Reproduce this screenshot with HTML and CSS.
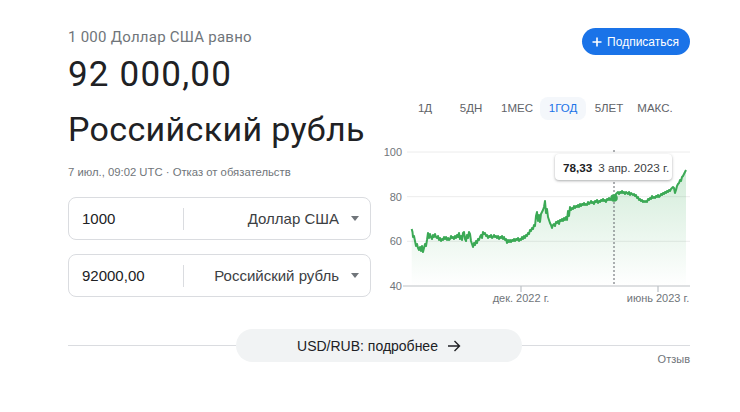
FILE: index.html
```html
<!DOCTYPE html>
<html lang="ru">
<head>
<meta charset="utf-8">
<link rel="stylesheet" href="styles.css">
</head>
<body>
<div class="page">
  <div class="columns">
    <div class="left">
      <div class="equal">1 000 Доллар США равно</div>
      <div class="amount">92 000,00</div>
      <div class="currency">Российский рубль</div>
      <div class="date">7 июл., 09:02 UTC · Отказ от обязательств</div>
      <div class="field">
        <div class="value">1000</div>
        <div class="sep"></div>
        <div class="select"><span>Доллар США</span><span class="caret"></span></div>
      </div>
      <div class="field field-2">
        <div class="value">92000,00</div>
        <div class="sep"></div>
        <div class="select"><span>Российский рубль</span><span class="caret"></span></div>
      </div>
    </div>
    <div class="right">
      <button class="subscribe"><svg class="plus" width="10" height="10" viewBox="0 0 10 10"><path d="M5 0.5V9.5M0.5 5H9.5" stroke="#fff" stroke-width="1.6"/></svg>Подписаться</button>
      <div class="tabs">
        <span class="tab">1Д</span>
        <span class="tab">5ДН</span>
        <span class="tab">1МЕС</span>
        <span class="tab active">1ГОД</span>
        <span class="tab">5ЛЕТ</span>
        <span class="tab">МАКС.</span>
      </div>
      <div class="chart">
        <svg width="310" height="170" viewBox="0 0 310 170">
          <defs>
            <linearGradient id="fill" x1="0" y1="0" x2="0" y2="1">
              <stop offset="0" stop-color="#34a853" stop-opacity="0.22"/>
              <stop offset="1" stop-color="#34a853" stop-opacity="0"/>
            </linearGradient>
          </defs>
          <g stroke="#ececec" stroke-width="1">
            <line x1="27" y1="12" x2="310" y2="12"/>
            <line x1="27" y1="56.7" x2="310" y2="56.7"/>
            <line x1="27" y1="101.3" x2="310" y2="101.3"/>
          </g>
          <g class="ylab" text-anchor="end">
            <text x="22" y="16">100</text>
            <text x="22" y="61">80</text>
            <text x="22" y="105">60</text>
            <text x="22" y="150">40</text>
          </g>
          <path fill="url(#fill)" d="M31.7,89 L32.5,92 33,97 34,96 35,101 36,106 37,104 38,108 39,110 40,107 41,111 42,106 43,112 44,108 45,104 46,106 47,100 48,93 49,98 50,94 51,97 52,99 53,95 54,97 55,94 56,97 57,98 58,96 59,100 60,98 61,101 62,99 63,100 64,97 65,99 66,97 67,100 68,98 69,100 70,99 71,96 72,98 73,97 74,99 75,96 76,98 77,95 78,97 79,93 80,99 81,96 82,100 83,93 84,92 85,99 86,101 87,95 88,98 89,92 90,94 91,101 92,104 93,107 94,103 95,105 96,101 97,103 98,99 99,100 100,97 101,95 102,98 103,92 104,94 105,93 106,96 107,95 108,98 109,96 110,97 111,95 112,98 113,97 114,95 115,97 116,96 117,98 118,96 119,99 120,97 121,98 122,96 123,99 124,97 125,100 126,99 127,103 128,100 129,102 130,100 131,102 132,100 133,101 134,99 135,101 136,99 137,100 138,98 139,101 140,99 141,100 142,97 143,99 144,96 145,98 146,95 147,96 148,93 149,94 150,90 151,91 152,88 153,89 154,85 155,86 156,76 157,72 158,81 159,75 160,82 161,74 162,72 163,70 164,67 165,61 166,73 167,69 168,77 169,80 170,83 171,85 172,88 173,85 174,84 175,86 176,82 177,83 178,81 179,84 180,80 181,81 182,79 183,81 184,78 185,80 186,77 187,80 188,71 189,76 190,67 191,70 192,68 193,69 194,66 195,68 196,66 197,67 198,65 199,67 200,64 201,66 202,64 203,65 204,63 205,65 206,64 207,65 208,62 209,64 210,63 211,61 212,63 213,62 214,64 215,61 216,62 217,60 218,63 219,61 220,62 221,60 222,61 223,59 224,61 225,60 226,62 227,59 228,60 229,58 230,60 231,59 232,58 233,59 234,58 235,56 236,54 237,53 238,52 239,54 240,52 241,53 242,51 243,53 244,52 245,54 246,52 247,53 248,54 249,52 250,55 251,53 252,54 253,55 254,54 255,56 256,55 257,58 258,57 259,60 260,59 261,61 262,60 263,62 264,61 265,62 266,61 267,62 268,59 269,60 270,58 271,59 272,56 273,58 274,57 275,58 276,56 277,57 278,55 279,57 280,56 281,54 282,55 283,53 284,54 285,52 286,53 287,51 288,52 289,50 290,51 291,49 292,48 293,47 294,48 295,53 296,50 297,46 298,44 299,43 300,40 301,41 302,37 303,36 304,34 305,32 306,30 L306,146 L31.7,146 Z"/>
          <line x1="234" y1="10" x2="234" y2="146" stroke="#5f6368" stroke-width="1" stroke-dasharray="2,2"/>
          <path fill="none" stroke="#3ba955" stroke-width="2" stroke-linejoin="round" d="M31.7,89 L32.5,92 33,97 34,96 35,101 36,106 37,104 38,108 39,110 40,107 41,111 42,106 43,112 44,108 45,104 46,106 47,100 48,93 49,98 50,94 51,97 52,99 53,95 54,97 55,94 56,97 57,98 58,96 59,100 60,98 61,101 62,99 63,100 64,97 65,99 66,97 67,100 68,98 69,100 70,99 71,96 72,98 73,97 74,99 75,96 76,98 77,95 78,97 79,93 80,99 81,96 82,100 83,93 84,92 85,99 86,101 87,95 88,98 89,92 90,94 91,101 92,104 93,107 94,103 95,105 96,101 97,103 98,99 99,100 100,97 101,95 102,98 103,92 104,94 105,93 106,96 107,95 108,98 109,96 110,97 111,95 112,98 113,97 114,95 115,97 116,96 117,98 118,96 119,99 120,97 121,98 122,96 123,99 124,97 125,100 126,99 127,103 128,100 129,102 130,100 131,102 132,100 133,101 134,99 135,101 136,99 137,100 138,98 139,101 140,99 141,100 142,97 143,99 144,96 145,98 146,95 147,96 148,93 149,94 150,90 151,91 152,88 153,89 154,85 155,86 156,76 157,72 158,81 159,75 160,82 161,74 162,72 163,70 164,67 165,61 166,73 167,69 168,77 169,80 170,83 171,85 172,88 173,85 174,84 175,86 176,82 177,83 178,81 179,84 180,80 181,81 182,79 183,81 184,78 185,80 186,77 187,80 188,71 189,76 190,67 191,70 192,68 193,69 194,66 195,68 196,66 197,67 198,65 199,67 200,64 201,66 202,64 203,65 204,63 205,65 206,64 207,65 208,62 209,64 210,63 211,61 212,63 213,62 214,64 215,61 216,62 217,60 218,63 219,61 220,62 221,60 222,61 223,59 224,61 225,60 226,62 227,59 228,60 229,58 230,60 231,59 232,58 233,59 234,58 235,56 236,54 237,53 238,52 239,54 240,52 241,53 242,51 243,53 244,52 245,54 246,52 247,53 248,54 249,52 250,55 251,53 252,54 253,55 254,54 255,56 256,55 257,58 258,57 259,60 260,59 261,61 262,60 263,62 264,61 265,62 266,61 267,62 268,59 269,60 270,58 271,59 272,56 273,58 274,57 275,58 276,56 277,57 278,55 279,57 280,56 281,54 282,55 283,53 284,54 285,52 286,53 287,51 288,52 289,50 290,51 291,49 292,48 293,47 294,48 295,53 296,50 297,46 298,44 299,43 300,40 301,41 302,37 303,36 304,34 305,32 306,30"/>
          <circle cx="234" cy="58" r="3.8" fill="#3ba955"/>
          <line x1="23" y1="146" x2="310" y2="146" stroke="#bdc1c6" stroke-width="1.2"/>
          <g stroke="#bdc1c6" stroke-width="1.2">
            <line x1="141" y1="146" x2="141" y2="152"/>
            <line x1="278" y1="146" x2="278" y2="152"/>
          </g>
          <g class="xlab" text-anchor="middle">
            <text x="141" y="162">дек. 2022 г.</text>
            <text x="278" y="162">июнь 2023 г.</text>
          </g>
        </svg>
        <div class="tooltip"><b>78,33</b><span>3 апр. 2023 г.</span></div>
      </div>
    </div>
  </div>
  <div class="footer">
    <div class="footer-row">
      <div class="rule"></div>
      <button class="more">USD/RUB: подробнее<svg class="arrow" width="14" height="12" viewBox="0 0 14 12"><path d="M1 6H12.5M7.5 1L12.5 6L7.5 11" fill="none" stroke="#202124" stroke-width="1.4"/></svg></button>
      <div class="rule"></div>
    </div>
    <div class="feedback">Отзыв</div>
  </div>
</div>
</body>
</html>
```

FILE: styles.css
```css
* { box-sizing: border-box; }
body {
  margin: 0;
  background: #fff;
  font-family: "Liberation Sans", Arial, sans-serif;
  color: #202124;
}
.page {
  width: 740px;
  padding: 27px 50px 0 68px;
}
.columns {
  display: flex;
  justify-content: space-between;
  align-items: flex-start;
}
.left {
  width: 303px;
  display: flex;
  flex-direction: column;
}
.equal {
  font-family: Roboto, "Liberation Sans", sans-serif;
  font-size: 15px;
  line-height: 20px;
  letter-spacing: 0.25px;
  color: #70757a;
}
.amount, .currency {
  font-family: Roboto, "Liberation Sans", sans-serif;
  font-size: 34px;
  line-height: 55px;
  color: #202124;
  white-space: nowrap;
}
.amount {
  font-size: 35px;
  letter-spacing: 1.2px;
}
.currency {
  letter-spacing: 0.35px;
}
.date {
  margin-top: 7px;
  font-size: 11.3px;
  line-height: 16px;
  color: #70757a;
}
.field {
  margin-top: 17px;
  height: 43px;
  border: 1px solid #dadce0;
  border-radius: 8px;
  display: flex;
  align-items: center;
  font-size: 15px;
  color: #202124;
}
.field-2 { margin-top: 14px; }
.value {
  width: 114px;
  padding-left: 13px;
}
.sep {
  width: 1px;
  height: 22px;
  background: #dadce0;
}
.select {
  flex: 1;
  display: flex;
  justify-content: flex-end;
  align-items: center;
  padding-right: 11px;
  color: #3c4043;
}
.caret {
  margin-left: 12px;
  width: 0;
  height: 0;
  border-left: 4.5px solid transparent;
  border-right: 4.5px solid transparent;
  border-top: 5px solid #70757a;
}
.right {
  width: 310px;
  display: flex;
  flex-direction: column;
}
.subscribe {
  align-self: flex-end;
  margin-top: 1px;
  height: 27px;
  padding: 0 11px 0 10px;
  border: none;
  border-radius: 14px;
  background: #1a73e8;
  color: #fff;
  font-family: "Liberation Sans", Arial, sans-serif;
  font-size: 12px;
  display: flex;
  align-items: center;
  gap: 5px;
}
.tabs {
  margin-top: 42px;
  padding-left: 22px;
  display: flex;
  height: 23px;
  align-items: center;
}
.tab {
  width: 46px;
  height: 23px;
  line-height: 23px;
  text-align: center;
  font-size: 11.5px;
  color: #5f6368;
  border-radius: 8px;
}
.tab.active {
  color: #1a73e8;
  background: #f4f7fb;
}
.chart {
  margin-top: 20px;
  position: relative;
  width: 310px;
  height: 170px;
}
.chart svg { display: block; }
.ylab text, .xlab text {
  font-family: "Liberation Sans", Arial, sans-serif;
  font-size: 11px;
  fill: #70757a;
}
.tooltip {
  position: absolute;
  left: 175px;
  top: 14px;
  width: 117px;
  height: 26px;
  background: #fff;
  border-radius: 4px;
  box-shadow: 0 1px 3px rgba(60,64,67,0.3), 0 1px 2px rgba(60,64,67,0.15);
  display: flex;
  align-items: center;
  padding-left: 8px;
  gap: 6px;
  font-size: 11.7px;
  color: #3c4043;
  white-space: nowrap;
}
.tooltip b { color: #202124; font-weight: bold; }
.footer {
  margin-top: 19px;
}
.footer-row {
  display: flex;
  align-items: center;
}
.rule {
  flex: 1;
  height: 1px;
  background: #dadce0;
}
.more {
  width: 286px;
  height: 33px;
  border: none;
  border-radius: 17px;
  background: #f1f3f4;
  font-family: "Liberation Sans", Arial, sans-serif;
  font-size: 14px;
  color: #202124;
  display: flex;
  align-items: center;
  justify-content: center;
  gap: 9px;
}
.feedback {
  margin-top: -10px;
  text-align: right;
  font-size: 11px;
  line-height: 14px;
  color: #70757a;
}
```
